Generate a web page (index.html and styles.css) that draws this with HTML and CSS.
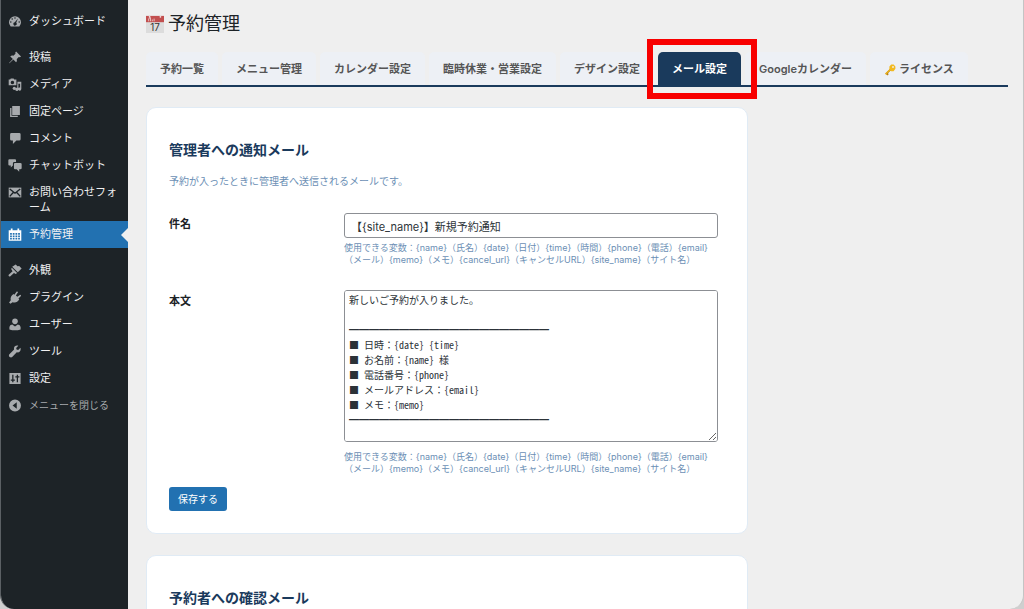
FILE: index.html
```html
<!DOCTYPE html>
<html lang="ja">
<head>
  <meta charset="UTF-8">
  <title>予約管理</title>
  <meta name="viewport" content="width=device-width, initial-scale=1.0">
  <link rel="stylesheet" href="styles.css">
</head>
<body>
<div class="window">

  <!-- Admin menu -->
  <nav class="sidebar">
    <ul class="menu">
      <li><a href="#"><svg viewBox="0 0 20 20"><path fill-rule="evenodd" d="M3.8 17h12.4A8.6 8.6 0 1 0 3.8 17zM10 3.800a1.100 1.100 0 1 1 0 2.200 1.100 1.100 0 0 1 0-2.200zM6 5.400a1.100 1.100 0 1 1 0 2.200 1.100 1.100 0 0 1 0-2.200zM4 9.500a1.100 1.100 0 1 1 0 2.200 1.100 1.100 0 0 1 0-2.200zM16 9.500a1.100 1.100 0 1 1 0 2.200 1.100 1.100 0 0 1 0-2.200zM14.300 5.600l-2.600 6.300a2.300 2.300 0 1 1-2-.7z"/></svg><span>ダッシュボード</span></a></li>
      <li class="separator"></li>
      <li><a href="#"><svg viewBox="0 0 20 20"><path d="M10.400 3l1.200-1.600 7 7L17 9.600l-1.600-.2-3 3c.6 1.700.3 3.200-.9 4.500L7.700 13 2 18.300 1.500 18 7 12.200 3.200 8.500c1.300-1.200 2.800-1.500 4.500-.9l3-3z"/></svg><span>投稿</span></a></li>
      <li><a href="#"><svg viewBox="0 0 20 20"><path fill-rule="evenodd" d="M1 3h2l1-1.500h4L9 3h3v8H1zM6.300 4.500a2.500 2.500 0 1 0 0 5 2.500 2.500 0 0 0 0-5z"/><path d="M13.500 6H19v10.500a2.300 2.300 0 1 1-1.700-2.200V9h-2.500v8a2.300 2.300 0 1 1-1.600-2.200z"/><circle cx="9" cy="15.500" r="2.300"/></svg><span>メディア</span></a></li>
      <li><a href="#"><svg viewBox="0 0 20 20"><path d="M6 2h11v13H6zM3 5h2v11h9v2H3z"/></svg><span>固定ページ</span></a></li>
      <li><a href="#"><svg viewBox="0 0 20 20"><path d="M5 2h11q2 0 2 2v7q0 2-2 2h-4l-5 5v-5H5q-2 0-2-2V4q0-2 2-2z"/></svg><span>コメント</span></a></li>
      <li><a href="#"><svg viewBox="0 0 20 20"><path d="M2 1h8q1.500 0 1.500 1.500V5H9Q7 5 7 7v3l-3 3v-3H2Q.5 10 .5 8.500v-6Q.5 1 2 1z"/><path d="M10 6.500h7.500Q19.500 6.500 19.500 8v6q0 1.500-2 1.500H16V19l-3.500-3.500H10q-1.500 0-1.500-1.500V8q0-1.500 1.500-1.500z"/></svg><span>チャットボット</span></a></li>
      <li><a href="#"><svg viewBox="0 0 20 20"><path d="M1 3h18v14H1z"/><path class="cut" d="M2.500 5l7.500 6 7.500-6M2.500 15.500l5-5.500M17.500 15.500l-5-5.500"/></svg><span>お問い合わせフォーム</span></a></li>
      <li class="current"><a href="#" aria-current="page"><svg viewBox="0 0 20 20"><path fill-rule="evenodd" d="M1 4h3V1.500h2.500V4h7V1.500H16V4h3v15H1zM3 8v2.300h2.500V8zm3.800 0v2.300h2.500V8zm3.900 0v2.300h2.500V8zm3.800 0v2.300H17V8zM3 11.500v2.300h2.500v-2.300zm3.800 0v2.300h2.500v-2.300zm3.900 0v2.300h2.500v-2.300zm3.800 0v2.300H17v-2.300zM3 15v2.300h2.500V15zm3.800 0v2.300h2.500V15zm3.900 0v2.300h2.500V15zm3.800 0v2.300H17V15z"/></svg><span>予約管理</span></a></li>
      <li class="separator"></li>
      <li><a href="#"><svg viewBox="0 0 20 20"><path d="M11 1.500L13.500 4l2.500-.5 3.500 3.500-5.500 5.500L6 4.500zM5.500 6l7.500 7.500-2 1.500-2.500-1.500L3 18.500q-1.500.5-2-.5t0-2L6.500 11 4.500 8z"/></svg><span>外観</span></a></li>
      <li><a href="#"><svg viewBox="0 0 20 20"><path d="M12.500 1.500q1.300-.3 1.800 1L11.300 7l2 2 4.200-3q1.500.5 1 1.800L15 11.500l1 1.500c-2.500 4-5.500 5-9.500 3.700L3.500 19 1.500 17l2.500-3C3 10.500 4.500 7 8 5l1 1z"/></svg><span>プラグイン</span></a></li>
      <li><a href="#"><svg viewBox="0 0 20 20"><circle cx="10" cy="5.500" r="4"/><path d="M2 17v-3.500Q2.500 10.500 6 10l4 3 4-3q3.500.5 4 3.500V17q-8 2.500-16 0z"/></svg><span>ユーザー</span></a></li>
      <li><a href="#"><svg viewBox="0 0 20 20"><path d="M17.800 4.800l-3.300 3-2.300-.5-.5-2.300 3-3.300c-4-1-7 1.800-6 5.600L2 14c-2.300 2.500 1.500 6 4 4l6.500-6.800c3.800 1 6.500-2.400 5.300-6.400z"/></svg><span>ツール</span></a></li>
      <li><a href="#"><svg viewBox="0 0 20 20"><path fill-rule="evenodd" d="M2 2h16v16H2zM6 4.500v7H4v1.800h2v2.200h1.800v-2.200h2v-1.800h-2v-7zM12.500 4.500v2.200h-2v1.800h2v7h1.800v-7h2V6.700h-2V4.500z"/></svg><span>設定</span></a></li>
      <li class="collapse"><button type="button"><svg viewBox="0 0 20 20"><path fill-rule="evenodd" d="M10 1.500a8.500 8.500 0 1 0 0 17 8.500 8.500 0 0 0 0-17zM12.500 5.500v9L6.500 10z"/></svg><span>メニューを閉じる</span></button></li>
    </ul>
  </nav>

  <main class="content">
    <h1>
      <svg class="calendar-icon" viewBox="0 0 20 20"><path fill="#dcdcdc" d="M0 1h20v19H0z"/><path fill="#c24f4f" d="M0 1h20v7H0z"/><path fill="none" stroke="#eacaca" d="M3 7V4l2-1v4M7 7V5M9 7V4"/><circle cx="4" cy="2" r="1" fill="#f4e4e4"/><circle cx="16" cy="2" r="1" fill="#f4e4e4"/><text x="10" y="18" text-anchor="middle">17</text></svg>
      <span>予約管理</span>
    </h1>

    <nav class="tabs">
      <a href="#">予約一覧</a>
      <a href="#">メニュー管理</a>
      <a href="#">カレンダー設定</a>
      <a href="#">臨時休業・営業設定</a>
      <a href="#">デザイン設定</a>
      <a href="#" class="active">メール設定</a>
      <a href="#">Googleカレンダー</a>
      <a href="#"><svg class="key-icon" viewBox="0 0 20 20"><path fill="none" stroke="#b9820f" stroke-width="3" d="M11 9L3 17M4 15.500l3 2.500"/><path fill="#f2b91f" fill-rule="evenodd" d="M12 1h4l3 3v4l-3 4h-4L9 9V4zM15 3.500a1.500 1.500 0 1 0 0 3 1.500 1.500 0 0 0 0-3z"/><path stroke="#f2b91f" stroke-width="2" d="M11 8.500L2.500 17"/></svg>ライセンス</a>
    </nav>

    <!-- Mail to the administrator -->
    <form class="card">
      <h2>管理者への通知メール</h2>
      <p class="lead">予約が入ったときに管理者へ送信されるメールです。</p>

      <div class="form-row">
        <label for="admin-subject">件名</label>
        <div>
          <input type="text" id="admin-subject" value="【{site_name}】新規予約通知">
          <p class="help">使用できる変数：{name}（氏名）{date}（日付）{time}（時間）{phone}（電話）{email}（メール）{memo}（メモ）{cancel_url}（キャンセルURL）{site_name}（サイト名）</p>
        </div>
      </div>

      <div class="form-row">
        <label for="admin-body">本文</label>
        <div>
          <textarea id="admin-body" rows="10" spellcheck="false">新しいご予約が入りました。

━━━━━━━━━━━━━━━━━━━━
■ 日時：{date} {time}
■ お名前：{name} 様
■ 電話番号：{phone}
■ メールアドレス：{email}
■ メモ：{memo}
━━━━━━━━━━━━━━━━━━━━
</textarea>
          <p class="help">使用できる変数：{name}（氏名）{date}（日付）{time}（時間）{phone}（電話）{email}（メール）{memo}（メモ）{cancel_url}（キャンセルURL）{site_name}（サイト名）</p>
        </div>
      </div>

      <button type="submit" class="save-button">保存する</button>
    </form>

    <!-- Mail to the customer -->
    <section class="card">
      <h2>予約者への確認メール</h2>
    </section>
  </main>

</div>
</body>
</html>
```

FILE: styles.css
```css
:root {
  --menu-bg: #1d2327;
  --page-bg: #efefef;
  --wp-blue: #2271b1;
  --navy: #1a3a5c;
  --help: #6c8fb5;
}

* {
  box-sizing: border-box;
}

body {
  margin: 0;
  background: #cfcfcf;
  font-family: Inter, "Noto Sans CJK JP", sans-serif;
  font-size: 11px;
  line-height: 15px;
  color: #1d2327;
}

.window {
  display: flex;
  height: 100vh;
  overflow: hidden;
  background: var(--page-bg);
  border: solid #c4c4c4;
  border-width: 0 1px;
  border-left-color: #5b6064;
  border-radius: 0 0 14px 14px;
}

/* --- Admin menu --- */
.sidebar {
  flex: 0 0 127px;
  background: var(--menu-bg);
}

.menu {
  list-style: none;
  margin: 0;
  padding: 8px 0 0;
}

.menu a,
.menu button {
  display: flex;
  gap: 7px;
  width: 100%;
  padding: 6px 7px;
  border: 0;
  background: none;
  color: #f0f0f1;
  font: inherit;
  text-align: left;
  text-decoration: none;
}

.menu svg {
  flex: none;
  width: 14px;
  height: 15px;
  fill: #a7aaad;
}

.menu .cut {
  fill: none;
  stroke: var(--menu-bg);
  stroke-width: 2;
}

.menu .separator {
  height: 9px;
}

.menu .current {
  position: relative;
  background: var(--wp-blue);
}

.menu .current svg {
  fill: #fff;
}

.menu .current::after {
  content: "";
  position: absolute;
  top: 7px;
  right: 0;
  border: 7px solid transparent;
  border-left-width: 0;
  border-right-color: var(--page-bg);
}

.menu .collapse button {
  color: #a7aaad;
  font-size: 10px;
}

/* --- Page --- */
.content {
  flex: 1;
  min-width: 0;
  padding: 12px 15px 0 18px;
}

h1 {
  display: flex;
  align-items: center;
  gap: 4px;
  margin: 0 0 16px;
  font-size: 18px;
  line-height: 24px;
  font-weight: 400;
}

.calendar-icon {
  width: 18px;
  height: 18px;
}

.calendar-icon text {
  font-size: 11px;
  fill: #333;
}

.tabs {
  display: flex;
  gap: 4px;
  margin-bottom: 20px;
  border-bottom: 2px solid var(--navy);
  white-space: nowrap;
}

.tabs a {
  display: flex;
  align-items: center;
  gap: 3px;
  padding: 10px 14px 8px;
  border-radius: 5px 5px 0 0;
  background: #edf0f5;
  color: #555;
  font-weight: 600;
  text-decoration: none;
}

.tabs .active {
  position: relative;
  background: var(--navy);
  color: #fff;
}

/* red frame around the open tab */
.tabs .active::after {
  content: "";
  position: absolute;
  inset: -13px -16px -14px -11px;
  border: 6px solid #f80000;
}

.key-icon {
  width: 12px;
  height: 12px;
}

/* --- Cards --- */
.card {
  max-width: 602px;
  margin-bottom: 21px;
  padding: 22px;
  border: 1px solid #e0ebf5;
  border-radius: 10px;
  background: #fff;
}

h2 {
  margin: 10px 0 13px;
  color: var(--navy);
  font-size: 14px;
  line-height: 20px;
  font-weight: 700;
}

.lead {
  margin: 0 0 24px;
  color: var(--help);
  font-size: 10px;
  line-height: 16px;
}

.form-row {
  display: grid;
  grid-template-columns: 175px 1fr;
  padding-right: 7px;
  margin-bottom: 24px;
}

.form-row label {
  padding-top: 4px;
  font-weight: 600;
}

input,
textarea {
  display: block;
  width: 100%;
  border: 1px solid #8c8f94;
  border-radius: 3px;
  background: #fff;
  color: #2c3338;
}

input {
  height: 25px;
  padding: 0 6px;
  font: inherit;
}

textarea {
  height: 152px;
  padding: 1px 4px;
  font-family: "Noto Sans Mono CJK JP", "Noto Sans CJK JP", monospace;
  font-size: 10px;
  line-height: 15px;
  font-weight: 500;
  resize: vertical;
}

.help {
  margin: 4px 0 0;
  color: var(--help);
  font-size: 9px;
  line-height: 12px;
}

textarea + .help {
  margin-top: 9px;
}

.save-button {
  display: block;
  margin-top: -12px;
  height: 24px;
  padding: 0 9px;
  border: 0;
  border-radius: 3px;
  background: var(--wp-blue);
  color: #fff;
  font: inherit;
  font-size: 10px;
}
```
